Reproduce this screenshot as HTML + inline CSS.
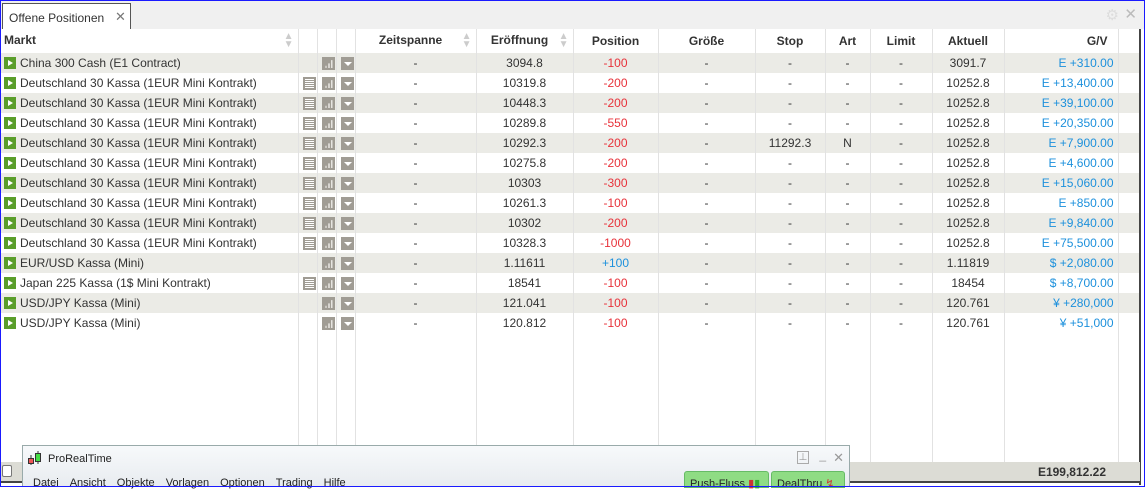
<!DOCTYPE html><html><head><meta charset="utf-8"><style>
*{margin:0;padding:0;box-sizing:border-box}
body{width:1145px;height:487px;overflow:hidden;background:#fff;font-family:"Liberation Sans",sans-serif;font-size:12px;color:#333;position:relative}
#frame{position:absolute;left:0;top:0;width:1145px;height:487px;border:1px solid #1a1aff;z-index:10;pointer-events:none}
#tabbar{position:absolute;left:1px;top:1px;width:1143px;height:28px;background:#f0f0f0}
#tab{position:absolute;left:1px;top:2px;width:129px;height:27px;background:#fff;border:1px solid #555;border-bottom:none;font-size:12px;padding:7px 0 0 6px;color:#333}
#tab span{position:absolute;left:112px;top:5px;font-size:13px;color:#777}
table{position:absolute;left:1px;top:29px;border-collapse:collapse;table-layout:fixed;width:1139px}
td,th{border-right:1px solid #e2e2e2;height:20px;padding:0 4px;white-space:nowrap;overflow:hidden;text-align:center}
th{height:24px;font-weight:bold;font-size:12px;color:#333;background:#fff}
tr.g td{background:#ebebe6}
.l{text-align:left}.r{text-align:right;padding-right:4px}
.red{color:#e8323a}.blu{color:#1c90dc}
.pl{display:inline-block;width:12px;height:12px;background:#5a9e2a;vertical-align:-2px;margin-right:4px;position:relative}
.pl:after{content:"";position:absolute;left:4px;top:3px;border-left:5px solid #fff;border-top:3px solid transparent;border-bottom:3px solid transparent}
.ic{display:inline-block;width:13px;height:13px;background:#a09c94;vertical-align:middle;position:relative}
.doc:after{content:"";position:absolute;left:2px;top:2px;width:9px;height:9px;background:repeating-linear-gradient(#fff 0 1px,#a09c94 1px 2px)}
.bar:after{content:"";position:absolute;left:3px;bottom:2px;width:8px;height:8px;background:linear-gradient(90deg,#c9c6c0 0 2px,transparent 2px 3px,#d8d5d0 3px 5px,transparent 5px 6px,#e6e4e0 6px 8px);clip-path:polygon(0 100%,0 70%,37% 70%,37% 40%,75% 40%,75% 0,100% 0,100% 100%)}
.dd:after{content:"";position:absolute;left:3px;top:5px;border-top:4px solid #fff;border-left:4px solid transparent;border-right:4px solid transparent}
.sort{float:right;color:#ccc;font-size:10px;line-height:8px;margin-top:0px}
#foot{position:absolute;left:1px;top:462px;width:1139px;height:21px;background:#dcdcd5;border-bottom:2px solid #444;font-weight:bold;font-size:12px;text-align:right;padding:3px 34px 0 0}
#rline{position:absolute;left:1139px;top:29px;width:2px;height:456px;background:#444}
#pop{position:absolute;left:22px;top:445px;width:828px;height:42px;background:linear-gradient(#f7f9fb,#e8ecf0);border:1px solid #9aa;z-index:5}
#pop .t{position:absolute;left:25px;top:7px;font-size:11px;color:#222}
#pop .m{position:absolute;left:10px;top:31px;font-size:11px;color:#222;word-spacing:0}
#pop .m span{margin-right:11px}
.btn{position:absolute;top:25px;height:17px;background:#8fdc84;border:1px solid #6b6;border-radius:3px 3px 0 0;font-size:11px;padding:5px 0 0 5px;color:#222}
</style></head><body>
<div id="frame"></div>
<div id="tabbar"><div id="tab">Offene Positionen<span>✕</span></div>
<div style="position:absolute;right:25px;top:5px;color:#ddd;font-size:15px">⚙</div><div style="position:absolute;right:7px;top:4px;color:#bbb;font-size:15px">✕</div></div>
<table>
<colgroup><col style="width:297px"><col style="width:19px"><col style="width:19px"><col style="width:19px"><col style="width:121px"><col style="width:97px"><col style="width:85px"><col style="width:97px"><col style="width:70px"><col style="width:45px"><col style="width:62px"><col style="width:72px"><col style="width:114px"><col style="width:22px"></colgroup>
<tr><th class="l" style="padding-left:3px">Markt<span class="sort">▲<br>▼</span></th><th></th><th></th><th></th><th>Zeitspanne<span class="sort">▲<br>▼</span></th><th>Eröffnung<span class="sort">▲<br>▼</span></th><th>Position</th><th>Größe</th><th>Stop</th><th>Art</th><th>Limit</th><th>Aktuell</th><th class="r" style="padding-right:10px">G/V</th><th></th></tr>
<tr class="g"><td class="l" style="padding-left:3px"><i class="pl"></i>China 300 Cash (E1 Contract)</td><td></td><td><i class="ic bar"></i></td><td><i class="ic dd"></i></td><td>-</td><td>3094.8</td><td class="red">-100</td><td>-</td><td>-</td><td>-</td><td>-</td><td>3091.7</td><td class="r blu">E +310.00</td><td></td></tr>
<tr><td class="l" style="padding-left:3px"><i class="pl"></i>Deutschland 30 Kassa (1EUR Mini Kontrakt)</td><td><i class="ic doc"></i></td><td><i class="ic bar"></i></td><td><i class="ic dd"></i></td><td>-</td><td>10319.8</td><td class="red">-200</td><td>-</td><td>-</td><td>-</td><td>-</td><td>10252.8</td><td class="r blu">E +13,400.00</td><td></td></tr>
<tr class="g"><td class="l" style="padding-left:3px"><i class="pl"></i>Deutschland 30 Kassa (1EUR Mini Kontrakt)</td><td><i class="ic doc"></i></td><td><i class="ic bar"></i></td><td><i class="ic dd"></i></td><td>-</td><td>10448.3</td><td class="red">-200</td><td>-</td><td>-</td><td>-</td><td>-</td><td>10252.8</td><td class="r blu">E +39,100.00</td><td></td></tr>
<tr><td class="l" style="padding-left:3px"><i class="pl"></i>Deutschland 30 Kassa (1EUR Mini Kontrakt)</td><td><i class="ic doc"></i></td><td><i class="ic bar"></i></td><td><i class="ic dd"></i></td><td>-</td><td>10289.8</td><td class="red">-550</td><td>-</td><td>-</td><td>-</td><td>-</td><td>10252.8</td><td class="r blu">E +20,350.00</td><td></td></tr>
<tr class="g"><td class="l" style="padding-left:3px"><i class="pl"></i>Deutschland 30 Kassa (1EUR Mini Kontrakt)</td><td><i class="ic doc"></i></td><td><i class="ic bar"></i></td><td><i class="ic dd"></i></td><td>-</td><td>10292.3</td><td class="red">-200</td><td>-</td><td>11292.3</td><td>N</td><td>-</td><td>10252.8</td><td class="r blu">E +7,900.00</td><td></td></tr>
<tr><td class="l" style="padding-left:3px"><i class="pl"></i>Deutschland 30 Kassa (1EUR Mini Kontrakt)</td><td><i class="ic doc"></i></td><td><i class="ic bar"></i></td><td><i class="ic dd"></i></td><td>-</td><td>10275.8</td><td class="red">-200</td><td>-</td><td>-</td><td>-</td><td>-</td><td>10252.8</td><td class="r blu">E +4,600.00</td><td></td></tr>
<tr class="g"><td class="l" style="padding-left:3px"><i class="pl"></i>Deutschland 30 Kassa (1EUR Mini Kontrakt)</td><td><i class="ic doc"></i></td><td><i class="ic bar"></i></td><td><i class="ic dd"></i></td><td>-</td><td>10303</td><td class="red">-300</td><td>-</td><td>-</td><td>-</td><td>-</td><td>10252.8</td><td class="r blu">E +15,060.00</td><td></td></tr>
<tr><td class="l" style="padding-left:3px"><i class="pl"></i>Deutschland 30 Kassa (1EUR Mini Kontrakt)</td><td><i class="ic doc"></i></td><td><i class="ic bar"></i></td><td><i class="ic dd"></i></td><td>-</td><td>10261.3</td><td class="red">-100</td><td>-</td><td>-</td><td>-</td><td>-</td><td>10252.8</td><td class="r blu">E +850.00</td><td></td></tr>
<tr class="g"><td class="l" style="padding-left:3px"><i class="pl"></i>Deutschland 30 Kassa (1EUR Mini Kontrakt)</td><td><i class="ic doc"></i></td><td><i class="ic bar"></i></td><td><i class="ic dd"></i></td><td>-</td><td>10302</td><td class="red">-200</td><td>-</td><td>-</td><td>-</td><td>-</td><td>10252.8</td><td class="r blu">E +9,840.00</td><td></td></tr>
<tr><td class="l" style="padding-left:3px"><i class="pl"></i>Deutschland 30 Kassa (1EUR Mini Kontrakt)</td><td><i class="ic doc"></i></td><td><i class="ic bar"></i></td><td><i class="ic dd"></i></td><td>-</td><td>10328.3</td><td class="red">-1000</td><td>-</td><td>-</td><td>-</td><td>-</td><td>10252.8</td><td class="r blu">E +75,500.00</td><td></td></tr>
<tr class="g"><td class="l" style="padding-left:3px"><i class="pl"></i>EUR/USD Kassa (Mini)</td><td></td><td><i class="ic bar"></i></td><td><i class="ic dd"></i></td><td>-</td><td>1.11611</td><td class="blu">+100</td><td>-</td><td>-</td><td>-</td><td>-</td><td>1.11819</td><td class="r blu">$ +2,080.00</td><td></td></tr>
<tr><td class="l" style="padding-left:3px"><i class="pl"></i>Japan 225 Kassa (1$ Mini Kontrakt)</td><td><i class="ic doc"></i></td><td><i class="ic bar"></i></td><td><i class="ic dd"></i></td><td>-</td><td>18541</td><td class="red">-100</td><td>-</td><td>-</td><td>-</td><td>-</td><td>18454</td><td class="r blu">$ +8,700.00</td><td></td></tr>
<tr class="g"><td class="l" style="padding-left:3px"><i class="pl"></i>USD/JPY Kassa (Mini)</td><td></td><td><i class="ic bar"></i></td><td><i class="ic dd"></i></td><td>-</td><td>121.041</td><td class="red">-100</td><td>-</td><td>-</td><td>-</td><td>-</td><td>120.761</td><td class="r blu">¥ +280,000</td><td></td></tr>
<tr><td class="l" style="padding-left:3px"><i class="pl"></i>USD/JPY Kassa (Mini)</td><td></td><td><i class="ic bar"></i></td><td><i class="ic dd"></i></td><td>-</td><td>120.812</td><td class="red">-100</td><td>-</td><td>-</td><td>-</td><td>-</td><td>120.761</td><td class="r blu">¥ +51,000</td><td></td></tr>
<tr><td style="height:129px"></td><td></td><td></td><td></td><td></td><td></td><td></td><td></td><td></td><td></td><td></td><td></td><td></td><td></td></tr>
</table>
<div id="rline"></div>
<div id="foot">E199,812.22</div>
<div style="position:absolute;left:2px;top:465px;width:10px;height:12px;border:1px solid #777;background:#fff;border-radius:2px"></div>
<div id="pop">
<svg style="position:absolute;left:4px;top:4px" width="16" height="16"><line x1="4" y1="5" x2="4" y2="15" stroke="#333"/><rect x="1.5" y="8.5" width="5" height="5" fill="#e55" stroke="#333"/><line x1="11" y1="1" x2="11" y2="14" stroke="#333"/><rect x="8.5" y="3.5" width="5" height="8" fill="#4d4" stroke="#333"/></svg>
<div class="t">ProRealTime</div>
<div style="position:absolute;right:40px;top:5px;width:12px;height:13px;border:1px solid #aaa;color:#999;font-size:10px;text-align:center;line-height:11px">⊥</div>
<div style="position:absolute;right:23px;top:2px;color:#999;font-size:12px">_</div>
<div style="position:absolute;right:5px;top:4px;color:#999;font-size:13px">✕</div>
<div class="m"><span>Datei</span><span>Ansicht</span><span>Objekte</span><span>Vorlagen</span><span>Optionen</span><span>Trading</span><span>Hilfe</span></div>
<div class="btn" style="left:661px;width:85px">Push-Fluss <span style="color:#c33">▮</span><span style="color:#3a3">▮</span></div>
<div class="btn" style="left:748px;width:74px">DealThru <span style="color:#c33">↯</span></div>
</div>
</body></html>
